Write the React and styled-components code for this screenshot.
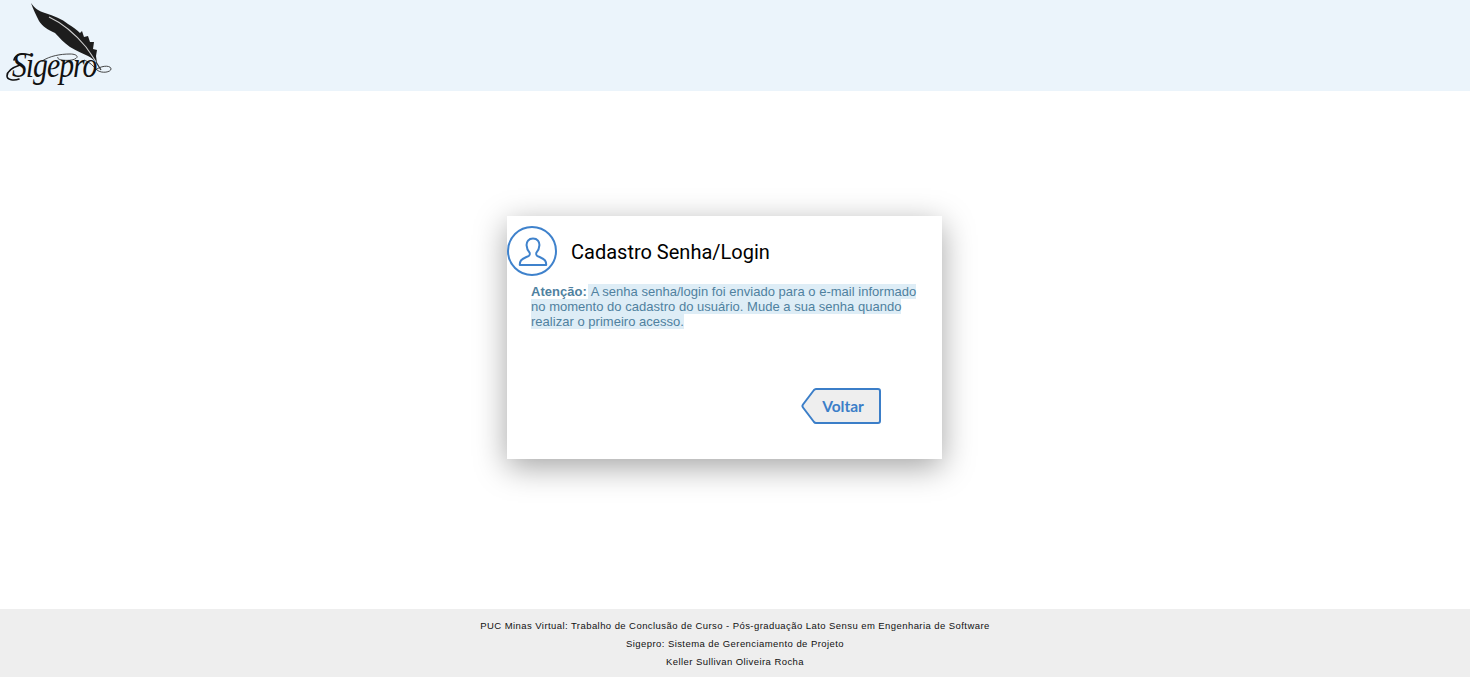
import React from 'react'
import styled, { createGlobalStyle } from 'styled-components'

const Global = createGlobalStyle`
  html, body { margin: 0; padding: 0; height: 100%; background: #fff; }
  body { font-family: "Liberation Sans", Arial, sans-serif; overflow: hidden; }
  #root { height: 100%; }
`

const Page = styled.div`
  height: 677px;
  display: flex;
  flex-direction: column;
`

const Header = styled.header`
  height: 91px;
  flex: none;
  background: #ebf4fb;
`

const Brand = styled.div`
  position: relative;
  width: 114px;
  height: 91px;
`

const BrandName = styled.span`
  position: absolute;
  left: 12px;
  top: 46px;
  font-family: "Liberation Serif", serif;
  font-style: italic;
  font-size: 35px;
  line-height: 40px;
  letter-spacing: -1.2px;
  color: #111;
  transform: scaleX(0.85);
  transform-origin: left center;
`

const Main = styled.main`
  flex: 1;
  display: flex;
  justify-content: center;
  align-items: flex-start;
  padding: 125px 21px 0 0;
`

const Card = styled.section`
  width: 435px;
  height: 243px;
  box-sizing: border-box;
  background: #fff;
  box-shadow: 0 8px 30px rgba(0, 0, 0, 0.36);
  display: flex;
  flex-direction: column;
  padding-top: 10px;
`

const CardHead = styled.div`
  display: flex;
  align-items: center;
  gap: 14px;
`

const Title = styled.h1`
  margin: 2px 0 0;
  font-family: Roboto, sans-serif;
  font-weight: 400;
  font-size: 20px;
  line-height: 26px;
  color: #000;
`

const Notice = styled.p`
  margin: 8px 15px 0 24px;
  font-family: "Liberation Sans", Arial, sans-serif;
  font-size: 13px;
  line-height: 15px;
  letter-spacing: 0.02px;
  color: #4f819f;
`

const Strong = styled.strong`
  font-weight: 700;
  margin-right: 1px;
`

const Mark = styled.span`
  background: #deedf6;
`

const Actions = styled.div`
  margin-top: 59px;
  display: flex;
  justify-content: flex-end;
  padding-right: 61px;
`

const BackButton = styled.button`
  position: relative;
  width: 80px;
  height: 36px;
  padding: 0 0 0 4px;
  border: 0;
  background: transparent;
  font-family: Lato, sans-serif;
  font-weight: 700;
  font-size: 15.5px;
  color: #3b7ec8;
  cursor: pointer;
`

const ButtonShape = styled.svg`
  position: absolute;
  inset: 0;
`

const ButtonLabel = styled.span`
  position: relative;
`

const Footer = styled.footer`
  height: 68px;
  flex: none;
  box-sizing: border-box;
  background: #eee;
  padding-top: 8px;
  text-align: center;
  font-size: 9.5px;
  line-height: 18px;
  letter-spacing: 0.43px;
  color: #111;
`

const FooterLine = styled.div``

const LogoArt = styled.svg`
  position: absolute;
  left: 0;
  top: 0;
`

function Logo() {
  return (
    <LogoArt width="114" height="91" viewBox="0 0 114 91">
      <path
        d="M31 3 C35 9 39 11 45 13 C54 16 62 19 68 24 C73 27 77 30 80 33 L82 31 L84 37 L88 36 L90 42 L94 42 L93 49 L97 50 L96 56 L97 63 C94 60 92 58 88 56 C82 53 77 51 70 47 C64 43 60 38 55 33 C48 30 42 26 39 21 C36 15 33 9 31 3 Z"
        fill="#1d1d1d"
      />
      <path d="M49 17 C62 23 76 35 86 47 C90 53 94 58 97 64" fill="none" stroke="#d0d0d0" strokeWidth="1.1" />
      <path d="M96 62 L101 70" fill="none" stroke="#333" strokeWidth="1.2" />
      <path
        d="M42 61 C50 56 60 54 70 54 C78 54 80 58 72 60 C66 61 56 60 58 57 M84 60 C90 62 93 66 97 70 C102 74 111 72 111 69 C111 65 101 65 94 71"
        fill="none"
        stroke="#333"
        strokeWidth="0.9"
      />
      <path
        d="M14 60 C15 54 23 53 30 55 M20 65 C14 67 7 71 7 76 C7 80 14 81 19 79"
        fill="none"
        stroke="#111"
        strokeWidth="1.6"
        strokeLinecap="round"
      />
    </LogoArt>
  )
}

function UserIcon() {
  return (
    <svg width="50" height="50" viewBox="0 0 50 50" fill="none" stroke="#3f82cc" style={{ flex: 'none' }}>
      <circle cx="25" cy="25" r="24" strokeWidth="2" />
      <path
        d="M26 12.5 C21.5 12.5 19.4 15.6 19.6 19.4 C19.8 22.6 21.2 25 22.4 26.4 C23 27.2 22.9 29 21.9 29.8 C20 31 15.6 32.2 14 34.4 C13.2 35.6 12.7 37.4 12.8 39 L39.2 39 C39.3 37.4 38.8 35.6 38 34.4 C36.4 32.2 32 31 30.1 29.8 C29.1 29 29 27.2 29.6 26.4 C30.8 25 32.2 22.6 32.4 19.4 C32.6 15.6 30.5 12.5 26 12.5 Z"
        strokeWidth="2"
        strokeLinejoin="round"
      />
    </svg>
  )
}

export default function App() {
  return (
    <Page>
      <Global />
      <Header>
        <Brand>
          <Logo />
          <BrandName>Sigepro</BrandName>
        </Brand>
      </Header>
      <Main>
        <Card>
          <CardHead>
            <UserIcon />
            <Title>Cadastro Senha/Login</Title>
          </CardHead>
          <Notice>
            <Strong>Atenção:</Strong>
            <Mark>
              {' '}A senha senha/login foi enviado para o e-mail informado no momento do cadastro do usuário. Mude a sua senha
              quando realizar o primeiro acesso.
            </Mark>
          </Notice>
          <Actions>
            <BackButton>
              <ButtonShape width="80" height="36" viewBox="0 0 80 36">
                <path
                  d="M15 1 H77 a2 2 0 0 1 2 2 V33 a2 2 0 0 1 -2 2 H15 a3 3 0 0 1 -2 -1 L2 19.5 a2.5 2.5 0 0 1 0 -3 L13 2 a3 3 0 0 1 2 -1 Z"
                  fill="#eee"
                  stroke="#3b7ec8"
                  strokeWidth="2"
                  strokeLinejoin="round"
                />
              </ButtonShape>
              <ButtonLabel>Voltar</ButtonLabel>
            </BackButton>
          </Actions>
        </Card>
      </Main>
      <Footer>
        <FooterLine>PUC Minas Virtual: Trabalho de Conclusão de Curso - Pós-graduação Lato Sensu em Engenharia de Software</FooterLine>
        <FooterLine>Sigepro: Sistema de Gerenciamento de Projeto</FooterLine>
        <FooterLine>Keller Sullivan Oliveira Rocha</FooterLine>
      </Footer>
    </Page>
  )
}
